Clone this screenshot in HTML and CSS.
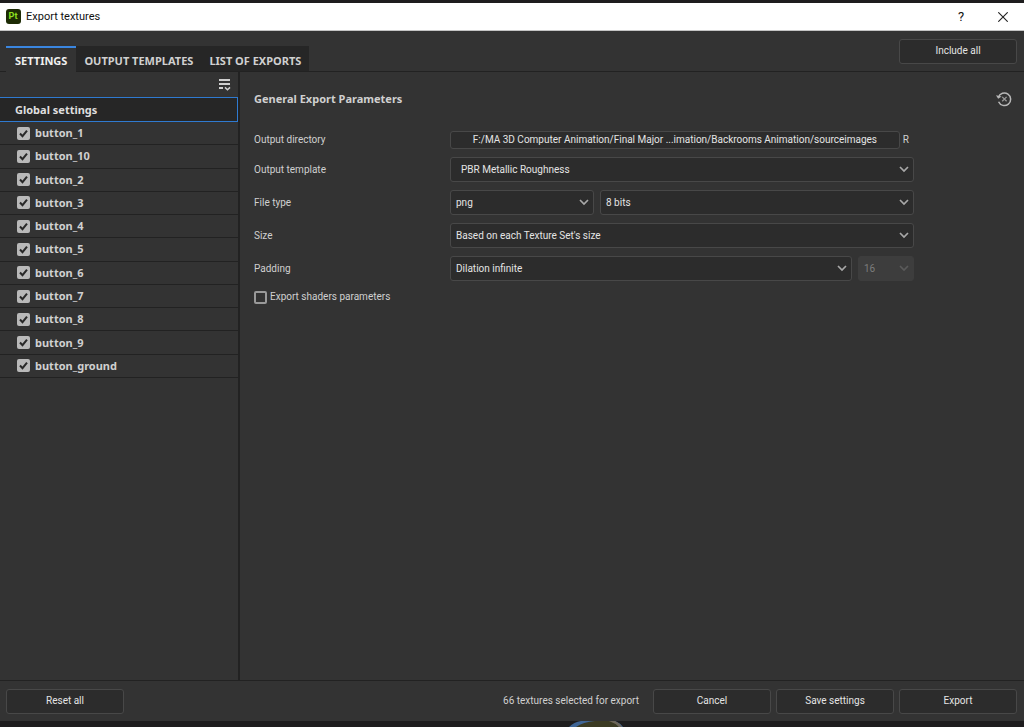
FILE: index.html
```html
<!DOCTYPE html>
<html lang="en">
<head>
    <meta charset="UTF-8">
    <meta name="viewport" content="width=device-width, initial-scale=1.0">
    <title>Export textures</title>
    <link rel="stylesheet" href="styles.css">
</head>
<body>
    <div class="window">
        <header class="titlebar">
            <svg class="app-icon" width="15" height="15" viewBox="0 0 15 15">
                <rect width="15" height="15" rx="3" fill="#1d2b05"></rect>
                <text x="7" y="10" text-anchor="middle" class="app-letters">Pt</text>
            </svg>
            <h1 class="window-title">Export textures</h1>
            <button class="title-button" type="button" aria-label="Help">?</button>
            <button class="title-button" type="button" aria-label="Close">
                <svg width="10" height="10" viewBox="0 0 10 10" fill="none" stroke="#222" stroke-width="1.1">
                    <path d="M0.3 0.3l9.4 9.4M9.7 0.3L0.3 9.7"></path>
                </svg>
            </button>
        </header>

        <div class="toolbar">
            <nav class="tabs">
                <button class="tab active" type="button">SETTINGS</button>
                <button class="tab" type="button">OUTPUT TEMPLATES</button>
                <button class="tab" type="button">LIST OF EXPORTS</button>
            </nav>
            <button class="button" type="button">Include all</button>
        </div>

        <div class="content">
            <aside class="sidebar">
                <div class="sidebar-tools">
                    <button class="icon-button" type="button" aria-label="List options">
                        <svg width="13" height="13" viewBox="0 0 13 13" fill="none" stroke="#d0d0d0">
                            <path d="M1 2h11M1 6h11M1 10h4" stroke-width="2"></path>
                            <path d="M7 9.4l2.5 2.4L12 9.4" stroke-width="1.5"></path>
                        </svg>
                    </button>
                </div>
                <button class="global-settings" type="button">Global settings</button>
                <ul class="texture-sets">
                    <li><label><input type="checkbox" checked>button_1</label></li>
                    <li><label><input type="checkbox" checked>button_10</label></li>
                    <li><label><input type="checkbox" checked>button_2</label></li>
                    <li><label><input type="checkbox" checked>button_3</label></li>
                    <li><label><input type="checkbox" checked>button_4</label></li>
                    <li><label><input type="checkbox" checked>button_5</label></li>
                    <li><label><input type="checkbox" checked>button_6</label></li>
                    <li><label><input type="checkbox" checked>button_7</label></li>
                    <li><label><input type="checkbox" checked>button_8</label></li>
                    <li><label><input type="checkbox" checked>button_9</label></li>
                    <li><label><input type="checkbox" checked>button_ground</label></li>
                </ul>
            </aside>

            <main class="panel">
                <div class="panel-header">
                    <h2 class="panel-title">General Export Parameters</h2>
                    <button class="icon-button" type="button" aria-label="Reset parameters">
                        <svg width="16" height="16" viewBox="0 0 16 16" fill="none" stroke="#b8b8b8">
                            <path d="M2.4 6.2A6.3 6.3 0 1 1 2.6 10.8" stroke-width="1.5"></path>
                            <path d="M0 4.2l2.2 3.6 3.4-2.4z" fill="#b8b8b8" stroke="none"></path>
                            <path d="M6.2 5.9l4.4 4.4M10.6 5.9l-4.4 4.4" stroke="#999" stroke-width="1.3"></path>
                        </svg>
                    </button>
                </div>

                <form class="parameters">
                    <label for="directory">Output directory</label>
                    <div class="field directory">
                        <button id="directory" class="path" type="button">F:/MA 3D Computer Animation/Final Major ...imation/Backrooms Animation/sourceimages</button>
                        <span>R</span>
                    </div>

                    <label for="template">Output template</label>
                    <div class="field">
                        <select id="template" class="indent"><option>PBR Metallic Roughness</option></select>
                    </div>

                    <label for="file-type">File type</label>
                    <div class="field file-type">
                        <select id="file-type"><option>png</option></select>
                        <select aria-label="Bit depth"><option>8 bits</option></select>
                    </div>

                    <label for="size">Size</label>
                    <div class="field">
                        <select id="size"><option>Based on each Texture Set's size</option></select>
                    </div>

                    <label for="padding">Padding</label>
                    <div class="field padding">
                        <select id="padding"><option>Dilation infinite</option></select>
                        <select aria-label="Dilation width" disabled><option>16</option></select>
                    </div>

                    <label class="shaders"><input type="checkbox">Export shaders parameters</label>
                </form>
            </main>
        </div>

        <footer class="footer">
            <button class="button" type="button">Reset all</button>
            <span class="summary">66 textures selected for export</span>
            <button class="button" type="button">Cancel</button>
            <button class="button" type="button">Save settings</button>
            <button class="button" type="button">Export</button>
        </footer>
    </div>

    <div class="backdrop">
        <svg width="54" height="6" viewBox="0 0 54 6">
            <path d="M0 6Q5 1 12 0H46Q51 2 54 6z" fill="#3f6596"></path>
            <path d="M7 6Q14 1 26 0H42Q48 2 50 6z" fill="#3b3a22"></path>
            <path d="M40 0h6q5 2 7 6h-3q-4-4-10-6z" fill="#6d6658"></path>
        </svg>
    </div>
</body>
</html>
```
FILE: styles.css
```css
* {
    margin: 0;
    padding: 0;
    box-sizing: border-box;
}

body {
    min-height: 100vh;
    display: flex;
    flex-direction: column;
    padding-top: 3px;
    background-color: #1e1d1e;
    color: #d0d0d0;
    font-family: Roboto, "Noto Sans", sans-serif;
    font-size: 10px;
    line-height: 16px;
}

button,
select {
    font: inherit;
    color: inherit;
    border: none;
    background: none;
}

svg {
    display: block;
}

.window {
    flex: 1;
    display: flex;
    flex-direction: column;
    background-color: #333333;
}

/* title bar */
.titlebar {
    height: 28px;
    display: flex;
    align-items: center;
    padding-left: 6px;
    background-color: #ffffff;
    border-bottom: 1px solid #c4c4c4;
    color: #111111;
}

.app-letters {
    font-size: 9px;
    font-weight: 700;
    fill: #8fe01f;
}

.window-title {
    flex: 1;
    padding-left: 5px;
    font-size: 11px;
    font-weight: 400;
}

.title-button {
    width: 42px;
    height: 26px;
    display: flex;
    align-items: center;
    justify-content: center;
    font-size: 13px;
}

/* tabs */
.toolbar {
    height: 41px;
    display: flex;
    align-items: flex-end;
    justify-content: space-between;
    padding: 0 7px 0 6px;
    border-bottom: 1px solid #222222;
}

.toolbar .button {
    align-self: center;
}

.tabs {
    display: flex;
}

.tab {
    height: 25px;
    padding: 4px 8px 0;
    background-color: #262626;
    font-family: "Noto Sans", sans-serif;
    font-size: 11px;
    font-weight: 700;
}

.tab.active {
    height: 26px;
    margin-bottom: -1px;
    padding: 2px 9px 0;
    background-color: #333333;
    border-top: 2px solid #3a86e0;
    color: #f0f0f0;
}

.button {
    width: 118px;
    height: 25px;
    border: 1px solid #484848;
    border-radius: 3px;
    background-color: #2c2c2c;
    color: #e4e4e4;
}

.icon-button {
    display: flex;
}

.content {
    flex: 1;
    display: flex;
}

/* texture set list */
.sidebar {
    width: 240px;
    flex-shrink: 0;
    border-right: 2px solid #222222;
    font-family: "Noto Sans", sans-serif;
    font-size: 11px;
    font-weight: 700;
}

.sidebar-tools {
    height: 25px;
    display: flex;
    align-items: center;
    justify-content: flex-end;
    padding-right: 7px;
}

.global-settings {
    display: block;
    width: 100%;
    height: 25px;
    padding-left: 15px;
    border: solid #2f7ad0;
    border-width: 1px 1px 1px 0;
    background-color: #262626;
    color: #dedede;
    text-align: left;
}

.texture-sets {
    height: 256px;
    display: grid;
    grid-auto-rows: 1fr;
    list-style: none;
}

.texture-sets li {
    display: flex;
    align-items: center;
    padding-left: 17px;
    border-bottom: 1px solid #222222;
}

label {
    display: flex;
    align-items: center;
}

input[type="checkbox"] {
    appearance: none;
    width: 13px;
    height: 13px;
    margin-right: 5px;
    border: 2px solid #999999;
    border-radius: 2px;
}

input[type="checkbox"]:checked {
    border: none;
    background: #b9b9b9 url("data:image/svg+xml,%3Csvg xmlns='http://www.w3.org/2000/svg' viewBox='0 0 13 13' fill='none' stroke='%23292929' stroke-width='2'%3E%3Cpath d='M3 6.5l2.5 2.7L10 3.6'/%3E%3C/svg%3E") no-repeat;
}

/* export parameters */
.panel {
    flex: 1;
    min-width: 0;
    padding: 19px 12px 0 14px;
}

.panel-header {
    display: flex;
    align-items: center;
    justify-content: space-between;
}

.panel-title {
    font-family: "Noto Sans", sans-serif;
    font-size: 11px;
    font-weight: 700;
}

.parameters {
    display: grid;
    grid-template-columns: 196px minmax(0, 1fr);
    row-gap: 8px;
    padding: 24px 98px 0 0;
}

.field {
    display: flex;
    gap: 6px;
}

.directory {
    align-items: center;
    gap: 3px;
    padding-right: 5px;
}

.path {
    flex: 1;
    min-width: 0;
    height: 18px;
    overflow: hidden;
    border: 1px solid #484848;
    border-radius: 3px;
    background-color: #2c2c2c;
    color: #e4e4e4;
    line-height: 16px;
    white-space: nowrap;
}

select {
    appearance: none;
    flex: 1;
    min-width: 0;
    height: 25px;
    padding: 0 20px 0 5px;
    border: 1px solid #484848;
    border-radius: 3px;
    background: #2c2c2c url("data:image/svg+xml,%3Csvg xmlns='http://www.w3.org/2000/svg' width='10' height='7' fill='none' stroke='%23a8a8a8' stroke-width='1.7'%3E%3Cpath d='M1 1l4 4 4-4'/%3E%3C/svg%3E") no-repeat right 4px center;
    color: #e4e4e4;
}

select:disabled {
    border-color: #3d3d3d;
    background-color: #3d3d3d;
    background-image: url("data:image/svg+xml,%3Csvg xmlns='http://www.w3.org/2000/svg' width='10' height='7' fill='none' stroke='%235a5a5a' stroke-width='1.7'%3E%3Cpath d='M1 1l4 4 4-4'/%3E%3C/svg%3E");
    color: #7c7c7c;
    opacity: 1;
}

select.indent {
    padding-left: 10px;
}

.file-type select:first-child {
    flex: 0 0 144px;
}

.padding select:last-child {
    flex: 0 0 56px;
}

.shaders {
    grid-column: 1 / -1;
}

.shaders input[type="checkbox"] {
    margin-right: 3px;
}

/* footer */
.footer {
    height: 41px;
    display: flex;
    align-items: center;
    gap: 5px;
    padding: 0 7px 0 6px;
    border-top: 1px solid #222222;
}

.summary {
    flex: 1;
    padding-right: 9px;
    text-align: right;
}

.backdrop {
    height: 6px;
    display: flex;
    justify-content: center;
    padding-left: 168px;
}
```
